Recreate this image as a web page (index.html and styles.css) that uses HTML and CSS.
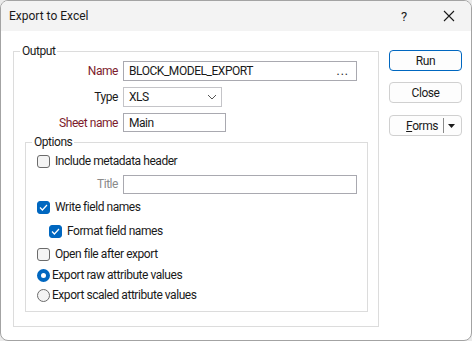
FILE: index.html
```
<!DOCTYPE html>
<html>
<head>
<meta charset="utf-8">
<link rel="stylesheet" href="styles.css">
</head>
<body>
<div class="window">
  <div class="titlebar">
    <span class="title">Export to Excel</span>
    <span class="tb-help">?</span>
    <span class="tb-close"><svg width="12" height="12" viewBox="0 0 12 12"><path d="M1 1L11 11M11 1L1 11" stroke="#1a1a1a" stroke-width="1.1" fill="none"/></svg></span>
  </div>
  <div class="body">
    <div class="main">
      <fieldset class="group output">
        <legend>Output</legend>
        <div class="form">
          <label class="lbl req">Name</label>
          <div class="input name-input"><span>BLOCK_MODEL_EXPORT</span><span class="dots">...</span></div>
          <label class="lbl">Type</label>
          <div class="input select"><span>XLS</span><svg width="10" height="6" viewBox="0 0 10 6"><path d="M1 1L5 5L9 1" stroke="#555" stroke-width="1" fill="none"/></svg></div>
          <label class="lbl req">Sheet name</label>
          <div class="input sheet"><span>Main</span></div>
        </div>
        <fieldset class="group options">
          <legend>Options</legend>
          <div class="row r1"><span class="cb"></span><span>Include metadata header</span></div>
          <div class="row title-row"><label class="lbl dim">Title</label><div class="input title-input"></div></div>
          <div class="row r3"><span class="cb on"><svg width="9" height="7" viewBox="0 0 9 7"><path d="M1 3.5L3.4 6L8 1" stroke="#fff" stroke-width="1.2" fill="none"/></svg></span><span>Write field names</span></div>
          <div class="row r4 indent"><span class="cb on"><svg width="9" height="7" viewBox="0 0 9 7"><path d="M1 3.5L3.4 6L8 1" stroke="#fff" stroke-width="1.2" fill="none"/></svg></span><span>Format field names</span></div>
          <div class="row r5"><span class="cb"></span><span>Open file after export</span></div>
          <div class="row r6"><span class="rb on"></span><span>Export raw attribute values</span></div>
          <div class="row r7"><span class="rb"></span><span>Export scaled attribute values</span></div>
        </fieldset>
      </fieldset>
    </div>
    <div class="buttons">
      <div class="btn primary">Run</div>
      <div class="btn">Close</div>
      <div class="btn split"><span class="split-label"><u>F</u>orms</span><span class="split-div"></span><span class="split-arrow"><svg width="7" height="4" viewBox="0 0 7 4"><path d="M0 0H7L3.5 4Z" fill="#1a1a1a"/></svg></span></div>
    </div>
  </div>
</div>
</body>
</html>
```

FILE: styles.css
```
* { box-sizing: border-box; }
html, body { margin: 0; padding: 0; }
body {
  width: 472px; height: 341px;
  background: #eaeaea;
  font-family: Roboto, "Liberation Sans", Arial, sans-serif;
  font-size: 12px;
  color: #1a1a1a;
  overflow: hidden;
}
.window {
  width: 472px; height: 341px;
  border: 1px solid #a3a3a3;
  border-radius: 8px;
  background: #fff;
  overflow: hidden;
  display: flex;
  flex-direction: column;
}
.titlebar {
  height: 30px;
  background: #f3f3f3;
  display: flex;
  align-items: center;
  flex: none;
}
.title { margin-left: 8px; font-size: 12px; flex: 1; }
.tb-help { width: 12px; margin-right: 30px; font-size: 13px; }
.tb-close { width: 12px; height: 12px; margin-right: 16px; display: flex; }
.body {
  flex: 1;
  display: flex;
  align-items: flex-start;
  padding: 13px 0 0 12px;
  letter-spacing: -0.45px;
}
.main { width: 366px; }
.group {
  margin: 0;
  padding: 0;
  border: 1px solid #dcdcdc;
  min-width: 0;
}
.group legend {
  padding: 0 2px;
  margin-left: 6px;
  line-height: 14px;
  height: 14px;
}
.output { padding: 0 0 12px 0; height: 283px; }
.form {
  display: grid;
  grid-template-columns: 104px auto;
  column-gap: 5px;
  row-gap: 6px;
  margin-top: 3px;
  align-items: center;
}
.lbl { text-align: right; white-space: nowrap; }
.req { color: #7d1c2c; }
.dim { color: #8a8a8a; }
.input {
  height: 20px;
  border: 1px solid #a9a9b0;
  background: #fff;
  display: flex;
  align-items: center;
  padding: 0 5px;
}
.name-input { width: 234px; justify-content: space-between; }
.dots { letter-spacing: 1px; margin-right: 2px; }
.select { width: 99px; justify-content: space-between; padding-right: 4px; border-color: #c4c4c8; }
.sheet { width: 103px; height: 19px; }
.options {
  margin: 3px 10px 0 11px;
  padding: 0 0 8px 0;
  height: 177px;
}
.row {
  display: flex;
  align-items: center;
  height: 20px;
  padding-left: 11px;
}
.row.r1 { margin-top: 2px; }
.row.title-row { margin-top: 3px; padding-left: 0; }
.title-row .lbl { width: 92px; }
.title-input { width: 234px; height: 19px; margin-left: 5px; }
.row.r3 { margin-top: 3px; }
.row.r4 { margin-top: 4px; }
.row.indent { padding-left: 23px; }
.row.r5 { margin-top: 3px; }
.row.r6 { margin-top: 1px; }
.row.r7 { margin-top: 0; }
.cb {
  width: 13px; height: 13px;
  border: 1px solid #6b6b6b;
  border-radius: 3px;
  background: #f4f4f4;
  margin-right: 5px;
  display: flex; align-items: center; justify-content: center;
  flex: none;
}
.cb.on { background: #0067c0; border-color: #0067c0; }
.rb {
  width: 13px; height: 13px;
  border: 1px solid #6b6b6b;
  border-radius: 50%;
  background: #f4f4f4;
  margin-right: 2px;
  flex: none;
}
.rb.on { background: #fff; border: 4px solid #0067c0; }
.buttons {
  margin-left: 10px;
  margin-top: 6px;
  display: flex;
  flex-direction: column;
  gap: 11px;
}
.btn {
  width: 73px; height: 21px;
  border: 1px solid #d0d0d0;
  border-radius: 4px;
  background: #fdfdfd;
  display: flex; align-items: center; justify-content: center;
}
.btn.primary { border-color: #0067c0; }
.btn.split { justify-content: flex-end; padding-right: 6px; margin-top: 1px; }
.split-label { margin-right: 5px; }
.split-div { width: 1px; height: 15px; background: #8a8a8a; margin-right: 4px; }
.split-arrow { display: flex; }
```
